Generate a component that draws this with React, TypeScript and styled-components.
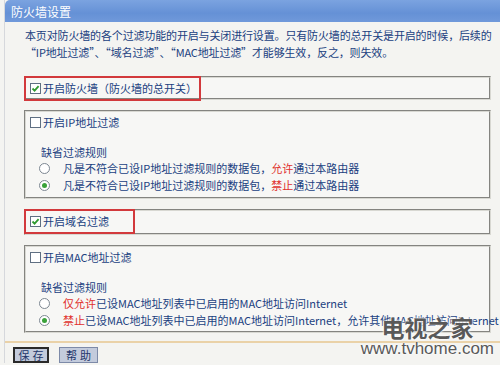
import styled, { createGlobalStyle } from 'styled-components';

const GlobalStyle = createGlobalStyle`
  html, body {
    margin: 0;
    padding: 0;
    background: #f4f4f1;
  }
  body {
    font-family: "Noto Sans CJK SC", "Liberation Sans", sans-serif;
  }
`;

const Page = styled.div`
  position: relative;
  width: 500px;
  height: 365px;
  overflow: hidden;
  background: #f4f4f1;
`;

const Panel = styled.div`
  margin-left: 4px;
  border-left: 1px solid #d6d8dc;
  display: flex;
  flex-direction: column;
`;

const Header = styled.div`
  height: 22px;
  display: flex;
  align-items: center;
  padding-left: 6px;
  border-top-left-radius: 5px;
  background: linear-gradient(#7ba3e0, #6591d6 60%, #7099da);
  color: #fff;
  font-size: 12px;
`;

const Desc = styled.p`
  margin: 5px 0 0 20px;
  font-size: 11px;
  line-height: 17px;
  color: #20407f;
  white-space: nowrap;
  letter-spacing: -0.15px;
`;

const Boxes = styled.div`
  display: flex;
  flex-direction: column;
  gap: 10px;
  margin: 15px 0 0 19px;
  width: 467px;
`;

const Box = styled.div<{ $h: number }>`
  height: ${(p) => p.$h}px;
  box-sizing: border-box;
  border: 2px groove #d8d8d2;
  background: #f7f7f5;
  padding: 0 0 0 4px;
  display: flex;
  flex-direction: column;
`;

const CheckRow = styled.div<{ $marked?: number }>`
  display: inline-flex;
  align-self: flex-start;
  align-items: center;
  gap: 2px;
  height: 19px;
  font-size: 11px;
  line-height: 15px;
  color: #20407f;
  box-sizing: border-box;
  flex-shrink: 0;
  white-space: nowrap;
  ${(p) =>
    p.$marked !== undefined
      ? `border: 2px solid #d2393c; margin: -2px 0 0 -6px; padding: 0 ${p.$marked}px 0 4px; height: 25px;`
      : `margin-top: 1px;`}
`;

const Check = styled.span`
  width: 11px;
  height: 11px;
  box-sizing: border-box;
  border: 1px solid #5f6f82;
  background: #fff;
  display: inline-flex;
  align-items: center;
  justify-content: center;
`;

const RuleTitle = styled.div`
  margin: 13px 0 0 11px;
  font-size: 11px;
  line-height: 15px;
  color: #20407f;
`;

const RadioRow = styled.div`
  display: flex;
  align-items: center;
  gap: 13px;
  margin-left: 9px;
  height: 17px;
  font-size: 11px;
  line-height: 15px;
  color: #20407f;
  white-space: nowrap;
`;

const Radio = styled.span<{ $on?: boolean }>`
  width: 11px;
  height: 11px;
  flex-shrink: 0;
  box-sizing: border-box;
  border-radius: 50%;
  border: 1px solid #7d8792;
  background: #fff;
  display: inline-flex;
  align-items: center;
  justify-content: center;
  &::after {
    content: '';
    width: 5px;
    height: 5px;
    border-radius: 50%;
    background: ${(p) => (p.$on ? '#3aa23a' : 'transparent')};
  }
`;

const Red = styled.span`
  color: #e0302c;
`;

const Footer = styled.div`
  margin-top: 8px;
  border-top: 2px solid #ead2a8;
  display: flex;
  align-items: flex-start;
  gap: 10px;
  padding: 4px 0 0 8px;
`;

const Button = styled.span<{ $focus?: boolean }>`
  width: ${(p) => (p.$focus ? 36 : 39)}px;
  height: 16px;
  box-sizing: border-box;
  display: inline-flex;
  align-items: center;
  justify-content: center;
  white-space: nowrap;
  font-size: 11px;
  line-height: 12px;
  letter-spacing: 3px;
  padding-left: 3px;
  color: #22356a;
  background: #c3cbdc;
  border: ${(p) => (p.$focus ? '2px solid #2a2a2a' : '1px solid #7d8aa8')};
`;

const Watermark = styled.div`
  position: absolute;
  right: 6px;
  bottom: 8px;
  display: flex;
  flex-direction: column;
  align-items: center;
  color: #595959;
  text-shadow: 0 0 2px #fff, 0 0 3px #fff;
  pointer-events: none;
`;

const MarkTitle = styled.span`
  font-size: 23px;
  font-weight: 700;
  line-height: 25px;
  letter-spacing: 0;
`;

const MarkUrl = styled.span`
  font-family: "Liberation Sans", Arial, sans-serif;
  font-size: 17px;
  line-height: 17px;
`;

const Tick = () => (
  <svg width="9" height="9" viewBox="0 0 9 9">
    <path d="M1.5 4.5 L3.6 6.6 L7.6 2.2" fill="none" stroke="#2f9a2f" strokeWidth="1.8" />
  </svg>
);

const CheckItem = ({ on, marked, label }: { on?: boolean; marked?: number; label: string }) => (
  <CheckRow $marked={marked}>
    <Check>{on && <Tick />}</Check>
    {label}
  </CheckRow>
);

const App = () => {
  return (
    <Page>
      <GlobalStyle />
      <Panel>
        <Header>防火墙设置</Header>
        <Desc>
          本页对防火墙的各个过滤功能的开启与关闭进行设置。只有防火墙的总开关是开启的时候，后续的
          <br />
          “IP地址过滤”、“域名过滤”、“MAC地址过滤”才能够生效，反之，则失效。
        </Desc>
        <Boxes>
          <Box $h={24}>
            <CheckItem on marked={2} label="开启防火墙（防火墙的总开关）" />
          </Box>
          <Box $h={89}>
            <CheckItem label="开启IP地址过滤" />
            <RuleTitle>缺省过滤规则</RuleTitle>
            <RadioRow>
              <Radio />
              <span>
                凡是不符合已设IP地址过滤规则的数据包，<Red>允许</Red>通过本路由器
              </span>
            </RadioRow>
            <RadioRow>
              <Radio $on />
              <span>
                凡是不符合已设IP地址过滤规则的数据包，<Red>禁止</Red>通过本路由器
              </span>
            </RadioRow>
          </Box>
          <Box $h={26}>
            <CheckItem on marked={24} label="开启域名过滤" />
          </Box>
          <Box $h={88}>
            <CheckItem label="开启MAC地址过滤" />
            <RuleTitle>缺省过滤规则</RuleTitle>
            <RadioRow>
              <Radio />
              <span>
                <Red>仅允许</Red>已设MAC地址列表中已启用的MAC地址访问Internet
              </span>
            </RadioRow>
            <RadioRow>
              <Radio $on />
              <span>
                <Red>禁止</Red>已设MAC地址列表中已启用的MAC地址访问Internet，允许其他MAC地址访问Internet
              </span>
            </RadioRow>
          </Box>
        </Boxes>
        <Footer>
          <Button $focus>保存</Button>
          <Button>帮助</Button>
        </Footer>
      </Panel>
      <Watermark>
        <MarkTitle>电视之家</MarkTitle>
        <MarkUrl>www.tvhome.com</MarkUrl>
      </Watermark>
    </Page>
  );
};

export default App;
